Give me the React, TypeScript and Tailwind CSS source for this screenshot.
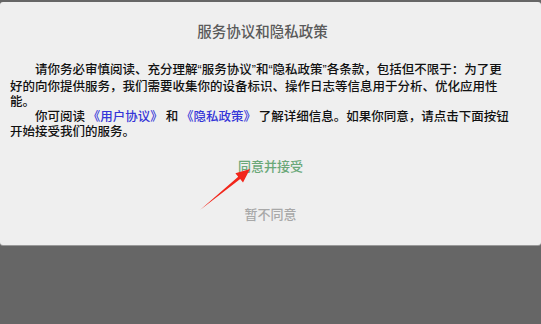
import React from "react";

const Link = ({ children }: { children: React.ReactNode }) => (
  <span className="text-[#3535d8]">{children}</span>
);

// narrow quote marks like the reference's fallback font
const Q = ({ children }: { children: React.ReactNode }) => (
  <span style={{ fontFamily: '"Liberation Sans", sans-serif' }}>{children}</span>
);

export default function App() {
  return (
    <div
      className="relative h-[324px] w-full bg-[#666666] pt-[2px]"
      style={{ fontFamily: '"Noto Sans CJK SC", "Noto Sans", sans-serif' }}
    >
      <div className="flex h-[243px] flex-col rounded-[3px] bg-[#efefef] shadow-[0_1px_0_#9a9a9a]">
        <h1 className="mt-[19px] pr-[16px] text-center text-[14.5px] font-medium leading-[20px] text-[#5a5a5a]">
          服务协议和隐私政策
        </h1>
        <p className="mt-[20px] whitespace-nowrap px-[10px] text-[12.5px] font-medium leading-[15px] text-[#111]">
          <span className="pl-[25px]" />
          请你务必审慎阅读、充分理解<Q>“</Q>服务协议<Q>”</Q>和<Q>“</Q>隐私政策<Q>”</Q>各条款，包括但不限于：为了更
          <br />
          好的向你提供服务，我们需要收集你的设备标识、操作日志等信息用于分析、优化应用性
          <br />
          能。
          <br />
          <span className="pl-[25px]" />
          你可阅读 <Link>《用户协议》</Link> 和 <Link>《隐私政策》</Link> 了解详细信息。如果你同意，请点击下面按钮
          <br />
          开始接受我们的服务。
        </p>
        <button className="mx-auto mt-[18px] text-[13px] font-medium leading-[20px] text-[#6aa878]">
          同意并接受
        </button>
        <button className="mx-auto mt-[28px] text-[13px] font-medium leading-[20px] text-[#a8a8a8]">
          暂不同意
        </button>
      </div>

      <svg
        className="pointer-events-none absolute inset-0"
        width="541"
        height="324"
        viewBox="0 0 541 324"
      >
        <polygon
          points="200,210 238.2,176.7 235.4,173.3 250,169 243,182.5 240.2,179.1"
          fill="#f2261b"
        />
      </svg>
    </div>
  );
}
